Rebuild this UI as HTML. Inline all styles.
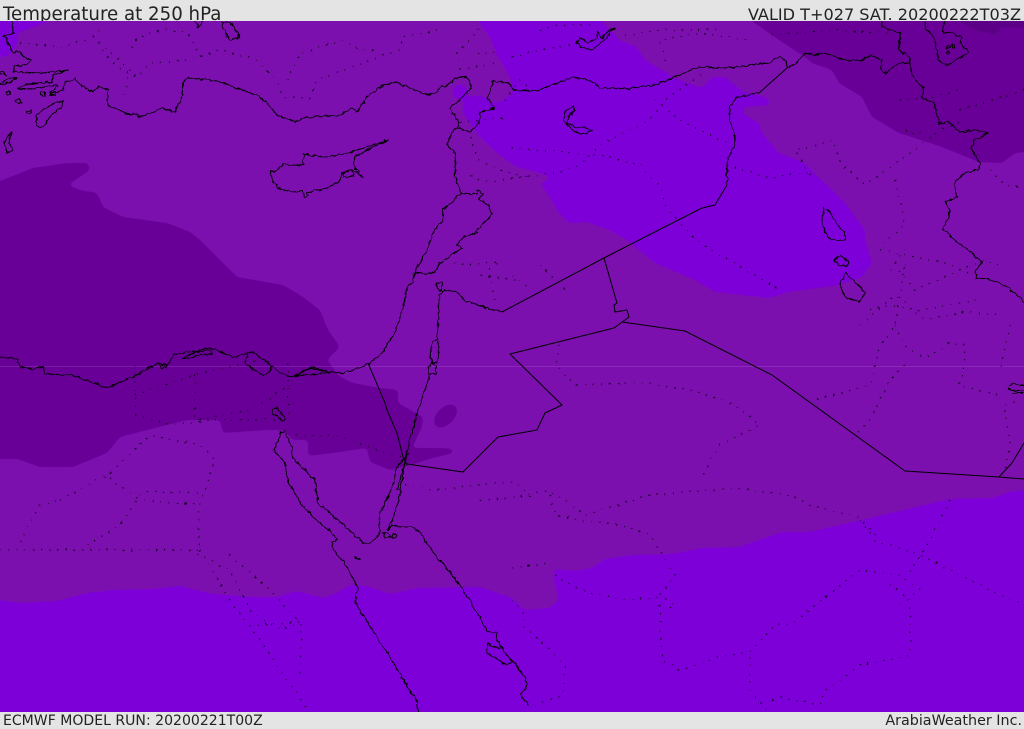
<!DOCTYPE html>
<html><head><meta charset="utf-8"><style>
html,body{margin:0;padding:0;background:#e4e4e4}
#p{position:relative;width:1024px;height:729px;overflow:hidden;background:#e4e4e4;font-family:"DejaVu Sans","Liberation Sans",sans-serif;color:#222}
.t{position:absolute;white-space:nowrap;line-height:1}
svg{position:absolute;left:0;top:21px}
</style></head><body><div id="p">
<div class="t" style="left:3px;top:6px;font-size:18.2px">Temperature at 250 hPa</div>
<div class="t" style="right:3px;top:7px;font-size:16.1px">VALID T+027 SAT. 20200222T03Z</div>
<div class="t" style="left:3px;top:714px;font-size:14.05px">ECMWF MODEL RUN: 20200221T00Z</div>
<div class="t" style="right:2px;top:714px;font-size:14.3px">ArabiaWeather Inc.</div>
<svg width="1024" height="691" viewBox="0 21 1024 691">
<defs>
<filter id="sm" filterUnits="userSpaceOnUse" x="-60" y="-60" width="1150" height="860">
<feGaussianBlur stdDeviation="2.2"/>
<feComponentTransfer><feFuncA type="linear" slope="6" intercept="-2.5"/></feComponentTransfer>
</filter>
<filter id="wg" filterUnits="userSpaceOnUse" x="-10" y="0" width="1044" height="730" color-interpolation-filters="sRGB">
<feTurbulence type="fractalNoise" baseFrequency="0.22" numOctaves="2" seed="4" result="n"/>
<feDisplacementMap in="SourceGraphic" in2="n" scale="4" xChannelSelector="R" yChannelSelector="G"/>
</filter>
</defs>
<rect x="0" y="21" width="1024" height="691" fill="#7b10ae"/>
<g fill="#7e00d8" filter="url(#sm)">
<path d="M478,-10 478,21 490,37 497,55 504,67 510,77 513,93 500,102 493,103 480,95 463,98 463,113 480,137 497,153 517,167 540,173 552,178 540,183 547,193 559,213 569,223 587,222 609,230 627,240 655,263 695,280 715,292 769,298 789,292 839,285 862,277 872,263 865,240 865,230 845,203 832,190 814,173 805,163 779,153 762,133 759,123 742,113 745,107 769,105 770,100 759,95 745,93 725,77 712,77 702,88 675,78 645,60 637,47 619,40 602,21 602,-10Z"/>
<path d="M-20,-10H50V21L17,33 17,44 10,55 -20,62Z"/>
<circle cx="460" cy="92" r="7.500"/>
<path d="M-20,599 0,600 20,603 57,601 87,593 113,590 153,589 180,586 213,594 253,597 277,597 297,591 323,598 337,593 350,585 367,586 390,594 417,588 480,587 512,598 525,610 549,608 559,600 554,580 554,569 575,571 592,568 605,559 632,555 672,554 702,548 739,547 782,532 809,532 862,520 912,508 949,499 992,498 1009,492 1024,490 1044,489V750H-20Z"/>
</g>
<g fill="#680098" filter="url(#sm)">
<path d="M-20,188 0,181 33,168 67,163 88,163 90,170 68,185 80,190 97,193 103,207 123,217 167,223 190,232 200,240 223,263 237,277 283,285 300,295 320,310 328,330 340,347 327,360 340,377 353,383 380,388 398,390 398,403 423,417 422,427 412,448 440,448 453,449 453,453 433,458 407,466 390,470 370,462 367,448 333,453 308,456 308,440 293,440 283,430 267,430 223,433 220,420 187,420 147,430 120,437 107,453 73,467 40,467 17,459 -20,459Z"/>
<ellipse cx="445.500" cy="416" rx="14" ry="8.500" transform="rotate(-45 445.500 416)"/>
<path d="M752,-10 752,21 779,40 805,57 812,63 832,70 839,83 862,97 872,117 899,133 942,147 979,162 1002,163 1015,153 1024,152 1044,151V-10Z"/>
</g>
<path d="M958,21 975,30 995,35 1002,27 1024,28V21Z" fill="#5c0088"/>
<rect x="0" y="366" width="1024" height="1" fill="#fff" fill-opacity=".11"/>
<g fill="none" stroke="#000" stroke-width="1.200" stroke-dasharray="1.200 7" stroke-opacity=".85" filter="url(#wg)">
<path d="M20,43 63,47 93,37 100,30"/>
<path d="M93,37 130,70 123,100"/>
<path d="M93,37 110,60 123,70 137,77 150,63 187,60 220,50 253,58 277,80 283,97 310,98 317,80 343,70 383,55 400,50 402,37 440,30"/>
<path d="M197,50 187,32 163,30 137,38 130,50"/>
<path d="M287,80 300,53 343,40 360,50 380,50"/>
<path d="M460,70 457,53 473,37 480,27"/><path d="M460,70 497,63"/>
<path d="M477,53H495"/>
<path d="M470,137 478,160 500,170 530,178"/>
<path d="M471,176 490,182 530,176"/>
<path d="M460,122 505,118"/>
<path d="M512,57 540,50 570,45"/><path d="M540,30 560,25 590,25"/>
<path d="M625,35 660,30 720,30"/><path d="M665,60 660,40 700,33 750,40"/>
<path d="M505,100 520,80 530,88"/>
<path d="M512,148 560,152 600,155 640,165"/>
<path d="M512,178 560,172 580,165 600,145 650,120 665,100 700,75"/>
<path d="M655,100 680,120 730,145"/>
<path d="M640,165 660,185 665,205 695,240 720,255 780,290"/>
<path d="M727,165 770,178 810,172"/>
<path d="M810,175 795,150 835,140"/>
<path d="M834,145 842,165 865,185 890,168 940,130 965,120"/>
<path d="M895,180 905,225 880,245"/>
<path d="M890,270 905,250"/><path d="M772,35 830,30 890,33"/>
<path d="M900,100 930,98 960,90"/><path d="M960,110 1024,90"/>
<path d="M905,130 915,135 925,128"/>
<path d="M990,170 1005,185 1024,188"/>
<path d="M880,250 945,263 985,280"/>
<path d="M495,300 488,270 500,262 470,265 450,262"/>
<path d="M515,280 480,275"/>
<path d="M540,265 565,290"/><path d="M512,275 530,288"/>
<path d="M559,345 556,365 575,385 640,382 700,392 735,405 760,425 720,445 705,470 702,478"/>
<path d="M905,268 898,270 915,290 960,270 985,260 1000,265"/>
<path d="M870,310 890,305 920,310 980,300"/>
<path d="M860,325 895,295 925,320 965,312 1000,315"/>
<path d="M905,265 895,325 880,345 870,385 815,400"/>
<path d="M895,325 905,347 925,358 940,350 950,342 965,345 963,375 958,385 1000,395"/>
<path d="M905,365 890,380 870,420 850,440"/>
<path d="M1010,325 1000,370"/>
<path d="M1005,410 1010,445 1005,470"/>
<path d="M1005,405 1020,400"/>
<path d="M135,365 135,420"/><path d="M135,395 195,375 260,360"/><path d="M195,375 195,420 250,410 290,385"/>
<path d="M135,415 170,425 215,420 285,420"/><path d="M288,363 288,415"/>
<path d="M296,435 340,436 390,455 405,458"/>
<path d="M105,478 150,435 200,445 215,460 205,490 198,510 200,550"/>
<path d="M60,500 105,475 140,500 200,505"/><path d="M20,542 40,505 60,500"/>
<path d="M87,545 120,525 140,495 145,492 200,493"/>
<path d="M0,550H200"/><path d="M190,550 230,570 250,610 280,630 300,622 250,625 280,670 310,712"/>
<path d="M200,550 230,600 260,640"/><path d="M230,555 270,590 302,625 300,680"/>
<path d="M405,485 440,490 475,485 515,482 535,500"/>
<path d="M480,500 510,498 550,490 585,515 650,495 735,488 790,495 810,505 860,518 875,535"/>
<path d="M550,495 555,515 580,520 620,525 650,535 660,550 675,575 660,595 675,605 665,610"/>
<path d="M512,568 550,563"/><path d="M555,575 580,590 625,600 657,598 660,610 662,660 680,670 720,657 750,652 775,625 790,625 860,570 900,575 920,590 900,605"/>
<path d="M512,600 525,615 522,625 540,640 560,660 565,665 563,695 530,708"/>
<path d="M750,657 750,690 768,712"/><path d="M772,700 780,698 820,705 825,690 840,680 860,665 910,655 910,600 885,580"/>
<path d="M860,520 875,540 920,555 990,590 1024,605"/><path d="M950,500 930,540 905,580"/>
</g>
<g fill="none" stroke="#000" stroke-width="1.050" stroke-linejoin="round" filter="url(#wg)">
<path d="M12,21 13,33 3,36 8,42 12,52 20,52 25,58 32,60 27,65 15,66 13,72 18,72 43,73 68,70 53,75 53,82 33,83 20,87 18,89 33,89 55,85 58,86 50,93 55,93 63,90 65,82 75,79 83,87 93,92 98,86 108,90 107,97 108,105 122,112 132,115 134,113 140,117 163,108 175,112 178,105 183,95 183,82 188,78 217,81 257,95 267,103 277,115 295,122 303,118 340,115 352,108 357,112 367,97 383,85 395,82 405,86 428,95 438,92 440,87 445,87 453,80 462,76 470,80 471,88 465,95 450,108 459,123 458,127 452,132 447,145 455,153 455,177 461,193 452,202 443,210 442,222 434,231 428,248 420,263 414,272 413,283 407,286 403,308 395,333 383,352 370,363 355,370 340,373 330,372 313,367 293,377 283,375 272,366 253,352 233,357 210,348 173,355 168,365 157,363 133,377 107,388 93,383 72,375 45,374 43,367 33,369 20,367 17,359 0,357"/>
<path d="M182,358 195,352 210,350 212,354 200,355 190,358Z"/>
<path d="M160,366 168,365 166,368 161,368Z"/>
<path d="M248,353 245,363 247,365 258,372 262,375 270,372 272,366"/>
<path d="M293,377 310,368 330,372 315,375 300,375Z"/>
<path d="M272,410 277,408 285,418 284,421 278,417 273,414Z"/>
<path d="M285,430 280,433 280,437 273,450 285,462 288,482 300,502 313,517 332,533 337,540 332,542 333,550 342,560 350,572 358,588 355,602 377,637 390,657 408,688 417,700 418,712"/>
<path d="M285,433 292,447 293,458 315,480 318,503 340,522 363,543 370,544 380,533 379,515 392,488 397,467 407,455"/>
<path d="M409,453 405,463 398,503 388,530 392,525 400,527 412,527 420,532 435,555 450,572 462,588 480,617 488,632 497,633 497,640 503,650 512,660 525,677 527,688 520,695 529,705"/>
<path d="M488,643 487,653 507,665 513,662 503,650 497,647 490,645Z"/>
<path d="M383,533 389,534 391,537 385,537Z"/><circle cx="394" cy="536" r="1.800"/>
<path d="M355,557 360,559 360,560 356,559Z"/>
<path d="M437,340 433,341 430,353 432,362 437,363 439,347Z"/>
<path d="M439,295 438,323 437,340"/>
<path d="M432,362 428,368 429,374 436,375 436,366Z"/>
<path d="M430,375 418,410 410,440 405,462 397,490"/>
<path d="M437,283 442,283 442,290 439,291 436,288Z"/>
<path d="M439,295 445,290 458,292 465,301 473,303 488,309 502,312"/>
<path d="M727,185 727,163 735,143 735,133 729,120 730,107 737,97 759,93"/>
<path d="M787,68 795,65 805,53 813,55 824,53 845,60 860,61 870,55 882,60 880,68 885,73 900,63 910,63"/>
<path d="M513,90 510,83 493,81 488,98 495,108 480,112 479,123 470,132 458,128"/>
<path d="M513,90 535,91 574,77 589,80 600,88 625,89 655,85 699,67 725,68 769,63 779,56 786,60 787,68"/>
<path d="M460,193 477,194 477,190 483,194 478,200 488,205 492,215 475,232 478,233 463,237 457,245 462,248 440,263 435,272 427,274 414,272"/>
<path d="M882,21 882,27 900,33 899,50 910,58 910,68 915,80 924,88 922,98 934,103 939,123 949,122 960,132 977,130 989,133 974,140 972,150 980,163 979,170 967,172 955,182 957,197 945,202 949,208 949,218 942,228 955,240 972,253 982,263 975,272 977,279 989,279 1009,288 1024,302"/>
<path d="M924,21 925,28 934,37 939,60 947,66 952,62 969,52 960,43 962,38 952,33 944,33 942,27 945,21"/>
<circle cx="948" cy="47" r="1.500"/><circle cx="953" cy="46" r="1.500"/><circle cx="948" cy="52" r="1.500"/>
<path d="M615,27 610,32 607,38 592,50 580,47 576,42 580,38 584,40 587,43 597,38 597,32 602,38 607,32Z"/>
<path d="M573,106 574,111 569,116 567,123 577,128 584,127 592,130 587,133 580,134 570,128 564,120 565,112Z"/>
<path d="M824,208 830,212 838,226 845,232 845,240 832,240 825,233 822,220Z"/>
<path d="M834,260 840,255 849,262 847,267 840,266Z"/>
<path d="M846,272 849,277 854,280 865,293 859,302 845,297 840,283Z"/>
<path d="M1009,385 1015,383 1024,386M1008,389 1015,391 1024,390M1012,393H1024"/>
<path d="M388,140 367,147 347,153 327,157 304,154 303,165 297,166 283,164 275,173 270,170 273,182 280,189 292,192 302,191 305,197 308,196 307,192 327,188 339,182 343,173 353,170 363,177 353,165 355,157 367,150Z"/>
<path d="M342,173 352,170 354,176 344,177Z"/>
<path d="M37,115 36,124 40,128 46,124 50,116 60,108 63,101 55,103 48,106 40,112Z"/>
<path d="M11,132 4,143 7,153 13,150 9,143Z"/>
<path d="M0,83 10,78 17,78 10,82 0,85Z"/>
<circle cx="8" cy="93" r="2"/><path d="M15,100 19,99 22,103 16,102Z"/><path d="M26,111 32,110 31,113 27,113Z"/>
<path d="M40,92 45,92 45,96 41,95Z"/><path d="M50,93 55,92 55,95 50,95Z"/>
<path d="M0,72 4,72 6,75 0,75Z"/>
<path d="M195,21 203,21 198,28Z"/>
<path d="M222,22 230,22 240,37 230,41 227,35 222,27Z"/>
</g>
<g fill="none" stroke="#000" stroke-width="1" stroke-linejoin="round">
<path d="M368,363 385,403 387,410 397,433 403,457 407,465"/>
<path d="M502,312 604,258 639,240 702,208 715,205 727,185"/>
<path d="M759,93 787,68"/>
<path d="M604,258 617,303 614,305 615,312 627,310 629,317 614,328 510,354 562,405 545,413 537,430 498,437 463,472 407,464"/>
<path d="M622,322 685,331 772,375 905,471 999,477 1024,479"/>
<path d="M999,477 1012,463 1024,443"/>
</g>
</svg>
</div></body></html>
